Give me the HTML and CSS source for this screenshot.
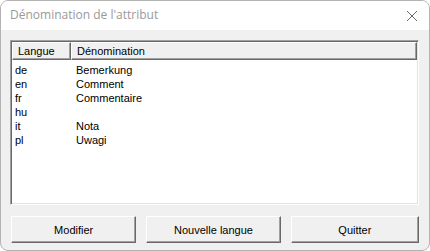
FILE: index.html
```html
<!DOCTYPE html>
<html lang="fr">
<head>
	<meta charset="UTF-8">
	<title>Dénomination de l'attribut</title>
	<link rel="stylesheet" href="styles.css">
</head>
<body>
	<div class="win">
		<div class="titlebar">
			<span class="title">Dénomination de l'attribut</span>
			<svg class="close" width="12" height="12" viewBox="0 0 12 12">
				<path d="M1 1 L11 11 M11 1 L1 11" stroke="#6a6a6a" stroke-width="1" fill="none"/>
			</svg>
		</div>
		<div class="content">
			<div class="list">
				<div class="head">
					<div class="hcell c1">Langue</div>
					<div class="hcell c2">Dénomination</div>
				</div>
				<ul class="rows">
					<li><span class="c1">de</span><span>Bemerkung</span></li>
					<li><span class="c1">en</span><span>Comment</span></li>
					<li><span class="c1">fr</span><span>Commentaire</span></li>
					<li><span class="c1">hu</span><span></span></li>
					<li><span class="c1">it</span><span>Nota</span></li>
					<li><span class="c1">pl</span><span>Uwagi</span></li>
				</ul>
			</div>
			<div class="buttons">
				<button class="btn b1">Modifier</button>
				<button class="btn b2">Nouvelle langue</button>
				<button class="btn b3">Quitter</button>
			</div>
		</div>
	</div>
</body>
</html>
```

FILE: styles.css
```css
*{
	margin: 0;
	padding: 0;
	box-sizing: border-box;
}
body{
	background: #fff;
	font-family: "Liberation Sans", Arial, sans-serif;
	font-size: 11px;
}
.win{
	width: 430px;
	height: 251px;
	border: 1px solid #b4b4b4;
	border-radius: 8px;
	overflow: hidden;
	display: flex;
	flex-direction: column;
	background: #f0f0f0;
}
.titlebar{
	height: 29px;
	background: #fff;
	display: flex;
	align-items: center;
	justify-content: space-between;
	padding: 0 11px 3px 9px;
}
.title{
	color: #9a9a9a;
	font-family: "Open Sans", "Liberation Sans", sans-serif;
	font-size: 12px;
}
.close{
	display: block;
	margin-top: 3px;
}
.content{
	flex: 1;
	padding: 10px 10px 0 9px;
}
.list{
	height: 165px;
	background: #fff;
	border-top: 1px solid #a0a0a0;
	border-left: 1px solid #a0a0a0;
	border-right: 1px solid #fff;
	border-bottom: 1px solid #fff;
	box-shadow: inset 1px 1px 0 #696969, inset -1px -1px 0 #e3e3e3;
	padding: 1px;
}
.head{
	display: flex;
	height: 18px;
	background: #f0f0f0;
}
.hcell{
	height: 18px;
	line-height: 16px;
	padding-left: 5px;
	border-top: 1px solid #fff;
	border-left: 1px solid #fff;
	border-right: 1px solid #696969;
	border-bottom: 1px solid #696969;
	box-shadow: inset -1px -1px 0 #a0a0a0;
	color: #000;
}
.head .c1{
	width: 59px;
}
.head .c2{
	flex: 1;
}
.rows{
	list-style: none;
	padding-top: 3px;
}
.rows li{
	display: flex;
	height: 14px;
	line-height: 14px;
	color: #000;
	padding-left: 3px;
}
.rows .c1{
	width: 61px;
}
.buttons{
	display: flex;
	gap: 10px;
	margin-top: 11px;
	padding-left: 1px;
}
.btn{
	height: 27px;
	background: #f0f0f0;
	font-family: "Liberation Sans", Arial, sans-serif;
	font-size: 11px;
	color: #000;
	border-top: 1px solid #fff;
	border-left: 1px solid #fff;
	border-right: 1px solid #696969;
	border-bottom: 1px solid #696969;
	box-shadow: inset -1px -1px 0 #a0a0a0;
}
.b1{
	width: 126px;
}
.b2{
	width: 135px;
}
.b3{
	width: 129px;
}
```
